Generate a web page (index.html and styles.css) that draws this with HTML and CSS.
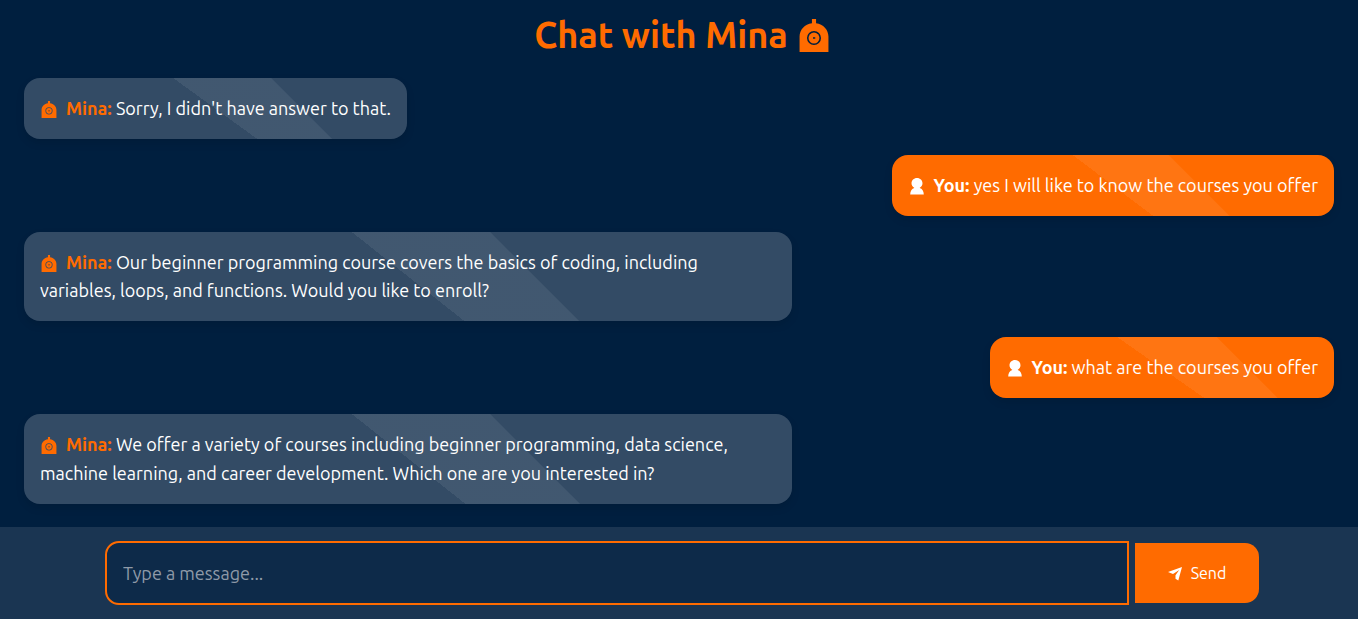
FILE: index.html
```html
<!DOCTYPE html>
<html lang="en">
<head>
<meta charset="utf-8">
<meta name="viewport" content="width=device-width, initial-scale=1">
<title>Chat with Mina</title>
<link rel="stylesheet" href="styles.css">
</head>
<body>
<svg class="symbols" aria-hidden="true">
  <symbol id="bot" viewBox="0 0 28 32">
    <path fill="currentColor" fill-rule="evenodd" d="M12 0h4v4.200C23 5 28 10.500 28 17v15H0V17C0 10.500 5 5 12 4.200zM14 11.700a6.800 6.800 0 1 0 0 13.600a6.800 6.800 0 1 0 0-13.600z"/>
    <circle cx="14" cy="18.500" r="5.300" fill="currentColor"/>
    <path class="bot-eye" d="M13 17.700h2.200v1.400H13z"/>
  </symbol>
  <symbol id="user" viewBox="0 0 14 17">
    <path fill="currentColor" d="M7 0c3.200 0 5.500 2.400 5.500 5.300 0 2-1.200 3.700-2.900 4.600C12.200 10.600 13.800 13 13.800 16.500H.2C.2 13 1.800 10.600 4.400 9.900 2.700 9 1.500 7.300 1.500 5.300 1.500 2.400 3.800 0 7 0z"/>
  </symbol>
  <symbol id="plane" viewBox="0 0 14 14">
    <path fill="currentColor" d="M14 0 10.300 13.500 7.500 11.800 7.500 8.300 11.200 3 5 6.900 0 5z"/>
  </symbol>
</svg>
<div class="app">
  <h1 class="title">Chat with Mina <svg class="title-icon" aria-hidden="true"><use href="#bot"/></svg></h1>
  <main class="chat">
    <p class="message bot"><svg class="icon" aria-hidden="true"><use href="#bot"/></svg><strong>Mina:</strong> Sorry, I didn't have answer to that.</p>
    <p class="message user"><svg class="icon" aria-hidden="true"><use href="#user"/></svg><strong>You:</strong> yes I will like to know the courses you offer</p>
    <p class="message bot"><svg class="icon" aria-hidden="true"><use href="#bot"/></svg><strong>Mina:</strong> Our beginner programming course covers the basics of coding, including variables, loops, and functions. Would you like to enroll?</p>
    <p class="message user"><svg class="icon" aria-hidden="true"><use href="#user"/></svg><strong>You:</strong> what are the courses you offer</p>
    <p class="message bot"><svg class="icon" aria-hidden="true"><use href="#bot"/></svg><strong>Mina:</strong> We offer a variety of courses including beginner programming, data science, machine learning, and career development. Which one are you interested in?</p>
  </main>
  <footer class="composer">
    <form class="form">
      <input class="field" type="text" placeholder="Type a message..." aria-label="Type a message">
      <button class="send" type="button"><svg class="send-icon" aria-hidden="true"><use href="#plane"/></svg>Send</button>
    </form>
  </footer>
</div>
</body>
</html>
```
FILE: styles.css
```css
* { box-sizing: border-box; }

body {
  margin: 0;
  background: #001f3f;
  color: #fff;
  font-family: Ubuntu, "Noto Sans", sans-serif;
  font-size: 18px;
  font-weight: 400;
  line-height: 1.6;
}

.symbols { position: absolute; width: 0; height: 0; }
.bot-eye { fill: #001f3f; }

.app {
  display: flex;
  flex-direction: column;
  min-height: 100vh;
}

.title {
  display: flex;
  justify-content: center;
  align-items: center;
  gap: 11px;
  margin: 0;
  padding: 8px 0 16px 5px;
  color: #ff6b00;
  font-size: 36px;
  font-weight: 600;
  line-height: 54px;
}

.title-icon { width: 30px; height: 33px; }

.chat {
  flex: 1;
  display: flex;
  flex-direction: column;
  gap: 16px;
  padding: 0 24px 23px;
}

.message {
  position: relative;
  overflow: hidden;
  max-width: 768px;
  margin: 0;
  padding: 16px;
  border-radius: 16px;
  box-shadow: 0 4px 8px rgba(0, 0, 0, 0.1);
}

/* diagonal sheen across the bubble */
.message::before {
  content: "";
  position: absolute;
  top: -50%;
  left: -50%;
  width: 200%;
  height: 200%;
  background: linear-gradient(to bottom right, rgba(255, 255, 255, 0.07) 50%, transparent 50%);
  transform: rotate(45deg);
  pointer-events: none;
}

.bot { align-self: flex-start; background: rgba(255, 255, 255, 0.2); }
.user { align-self: flex-end; background: #ff6b00; }

.message strong { font-weight: 600; }
.bot strong, .bot .icon { color: #ff6b00; }

.icon {
  width: 18px;
  height: 17px;
  margin-right: 8px;
  vertical-align: -3px;
}

.composer {
  padding: 14px 99px 14px 105px;
  background: rgba(255, 255, 255, 0.1);
}

.form {
  display: flex;
  align-items: center;
  gap: 6px;
}

.field {
  flex: 1;
  min-width: 0;
  height: 64px;
  padding: 0 16px;
  border: 2px solid #ff6b00;
  border-radius: 14px 0 0 14px;
  background: rgba(0, 31, 63, 0.5);
  color: #fff;
  font: inherit;
}

.field::placeholder { color: #8f9aa8; opacity: 1; }

.send {
  display: flex;
  justify-content: center;
  align-items: center;
  gap: 9px;
  width: 124px;
  height: 60px;
  padding: 1px 0 0;
  border: 0;
  border-radius: 0 14px 14px 0;
  background: #ff6b00;
  color: #fff;
  font: inherit;
  font-size: 16px;
}

.send-icon { width: 14px; height: 14px; }
```
